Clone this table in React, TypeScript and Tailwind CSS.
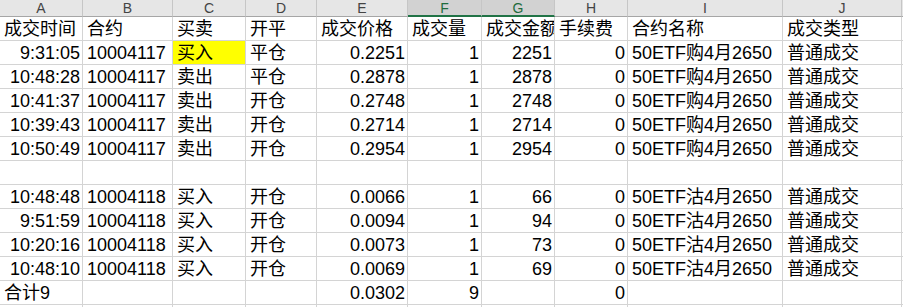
import React from "react";

const letters = ["A", "B", "C", "D", "E", "F", "G", "H", "I", "J"];
type Row = (string | null)[];

const header: Row = ["成交时间", "合约", "买卖", "开平", "成交价格", "成交量", "成交金额", "手续费", "合约名称", "成交类型"];

const rows: Row[] = [
  ["9:31:05", "10004117", "买入", "平仓", "0.2251", "1", "2251", "0", "50ETF购4月2650", "普通成交"],
  ["10:48:28", "10004117", "卖出", "平仓", "0.2878", "1", "2878", "0", "50ETF购4月2650", "普通成交"],
  ["10:41:37", "10004117", "卖出", "开仓", "0.2748", "1", "2748", "0", "50ETF购4月2650", "普通成交"],
  ["10:39:43", "10004117", "卖出", "开仓", "0.2714", "1", "2714", "0", "50ETF购4月2650", "普通成交"],
  ["10:50:49", "10004117", "卖出", "开仓", "0.2954", "1", "2954", "0", "50ETF购4月2650", "普通成交"],
  [null, null, null, null, null, null, null, null, null, null],
  ["10:48:48", "10004118", "买入", "开仓", "0.0066", "1", "66", "0", "50ETF沽4月2650", "普通成交"],
  ["9:51:59", "10004118", "买入", "开仓", "0.0094", "1", "94", "0", "50ETF沽4月2650", "普通成交"],
  ["10:20:16", "10004118", "买入", "开仓", "0.0073", "1", "73", "0", "50ETF沽4月2650", "普通成交"],
  ["10:48:10", "10004118", "买入", "开仓", "0.0069", "1", "69", "0", "50ETF沽4月2650", "普通成交"],
];

const total: Row = ["合计9", null, null, null, "0.0302", "9", null, "0", null, null];

const rightCols = new Set([0, 4, 5, 6, 7]);

function Cell({ text, right, yellow }: { text: string | null; right?: boolean; yellow?: boolean }) {
  return (
    <div
      className={
        "h-[24px] border-r border-b border-[#d4d4d4] overflow-hidden whitespace-nowrap flex items-end pb-[2px] leading-[18px] " +
        (right ? "justify-end pr-[2px] pl-[2px] " : "justify-start pl-[4px] ") +
        (yellow ? "bg-[#ffff00]" : "bg-white")
      }
    >
      {text}
    </div>
  );
}

function ColLetter({ l, sel }: { l: string; sel: boolean }) {
  return (
    <div
      className={
        "h-[17px] flex items-center justify-center text-[14px] leading-none border-r border-[#c6c6c6] font-['Liberation_Sans',sans-serif] " +
        (sel
          ? "bg-[#d2d2d2] text-[#1e6b3d] border-b-2 border-b-[#217346]"
          : "bg-[#e6e6e6] text-[#444444] border-b border-b-[#a6a6a6]")
      }
    >
      {l}
    </div>
  );
}

export default function App() {
  return (
    <div className="w-[903px] h-[307px] overflow-hidden bg-white text-black text-[18px] font-['Liberation_Sans','Noto_Sans_CJK_SC',sans-serif]">
      <div className="grid grid-cols-[83px_90px_73px_71px_91px_74px_73px_73px_155px_119px_1fr]">
        {letters.map((l, i) => (
          <ColLetter key={l} l={l} sel={i === 5 || i === 6} />
        ))}
        <div className="h-[17px] bg-[#e6e6e6] border-b border-[#a6a6a6]" />

        {header.map((h, i) => (
          <Cell key={"h" + i} text={h} />
        ))}
        <Cell text={null} />

        {rows.map((r, ri) => (
          <React.Fragment key={ri}>
            {r.map((c, ci) => (
              <Cell key={ci} text={c} right={rightCols.has(ci)} yellow={ri === 0 && ci === 2} />
            ))}
            <Cell text={null} />
          </React.Fragment>
        ))}

        {total.map((c, ci) => (
          <Cell key={"t" + ci} text={c} right={ci !== 0 && rightCols.has(ci)} />
        ))}
        <Cell text={null} />

        {Array.from({ length: 11 }).map((_, i) => (
          <Cell key={"e" + i} text={null} />
        ))}
      </div>
    </div>
  );
}
